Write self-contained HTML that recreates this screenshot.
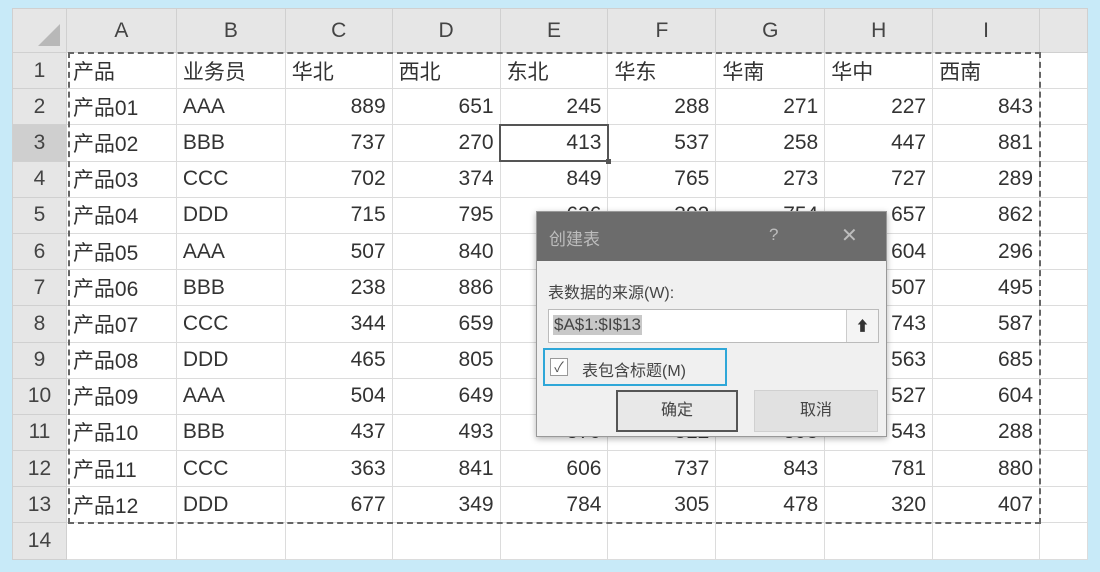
<!DOCTYPE html>
<html><head><meta charset="utf-8"><style>
*{margin:0;padding:0;box-sizing:border-box}
body{width:1100px;height:572px;background:#c8eaf8;position:relative;overflow:hidden;font-family:"Liberation Sans","Noto Sans CJK SC",sans-serif;color:#333}
#wrap{position:absolute;left:12px;top:8px;width:1076px;height:552px;background:#fff;overflow:hidden}
table{border-collapse:collapse;table-layout:fixed;font-size:21px}
td{border:1px solid #dcdcdc;height:36.2px;padding:0 6px;white-space:nowrap;overflow:hidden}
tr.h td{height:44px;background:#e6e6e6;text-align:center;color:#444;border-color:#d0d0d0}
td.r{background:#e6e6e6;text-align:center;color:#444;border-color:#d0d0d0;padding:0}
td.n{text-align:right}
td.sel{background:#cfcfcf}
.corner{position:relative}
.corner:after{content:"";position:absolute;right:6px;bottom:6px;border-style:solid;border-width:0 0 22px 22px;border-color:transparent transparent #b8b8b8 transparent}
#marq{position:absolute;left:68px;top:52px;width:973px;height:472px;border:2px dashed #666}
#cur{position:absolute;left:499px;top:124px;width:110px;height:38px;border:2px solid #555}
#cur:after{content:"";position:absolute;right:-4px;bottom:-4px;width:5px;height:5px;background:#555}
#dlg{position:absolute;left:536px;top:211px;width:351px;height:226px;background:#f0f0f0;border:1px solid #999;box-shadow:0 2px 6px rgba(0,0,0,.3)}
#tt{height:49px;background:#6c6c6c;color:#bdbdbd;font-size:17px;padding:15px 0 0 12px;position:relative}
#tt span{position:absolute;top:13px}
</style></head><body>
<div id="wrap">
<table>
<colgroup><col style="width:54px"><col style="width:110px"><col style="width:109px"><col style="width:107px"><col style="width:108px"><col style="width:108px"><col style="width:108px"><col style="width:109px"><col style="width:108px"><col style="width:107px"><col style="width:48px"></colgroup>
<tr class="h"><td class="corner"></td><td>A</td><td>B</td><td>C</td><td>D</td><td class="sel">E</td><td>F</td><td>G</td><td>H</td><td>I</td><td></td></tr>
<tr><td class="r">1</td><td>产品</td><td>业务员</td><td>华北</td><td>西北</td><td>东北</td><td>华东</td><td>华南</td><td>华中</td><td>西南</td><td></td></tr>
<tr><td class="r">2</td><td>产品01</td><td>AAA</td><td class="n">889</td><td class="n">651</td><td class="n">245</td><td class="n">288</td><td class="n">271</td><td class="n">227</td><td class="n">843</td><td></td></tr>
<tr><td class="r sel">3</td><td>产品02</td><td>BBB</td><td class="n">737</td><td class="n">270</td><td class="n">413</td><td class="n">537</td><td class="n">258</td><td class="n">447</td><td class="n">881</td><td></td></tr>
<tr><td class="r">4</td><td>产品03</td><td>CCC</td><td class="n">702</td><td class="n">374</td><td class="n">849</td><td class="n">765</td><td class="n">273</td><td class="n">727</td><td class="n">289</td><td></td></tr>
<tr><td class="r">5</td><td>产品04</td><td>DDD</td><td class="n">715</td><td class="n">795</td><td class="n">636</td><td class="n">302</td><td class="n">754</td><td class="n">657</td><td class="n">862</td><td></td></tr>
<tr><td class="r">6</td><td>产品05</td><td>AAA</td><td class="n">507</td><td class="n">840</td><td class="n">512</td><td class="n">418</td><td class="n">367</td><td class="n">604</td><td class="n">296</td><td></td></tr>
<tr><td class="r">7</td><td>产品06</td><td>BBB</td><td class="n">238</td><td class="n">886</td><td class="n">433</td><td class="n">721</td><td class="n">590</td><td class="n">507</td><td class="n">495</td><td></td></tr>
<tr><td class="r">8</td><td>产品07</td><td>CCC</td><td class="n">344</td><td class="n">659</td><td class="n">318</td><td class="n">266</td><td class="n">481</td><td class="n">743</td><td class="n">587</td><td></td></tr>
<tr><td class="r">9</td><td>产品08</td><td>DDD</td><td class="n">465</td><td class="n">805</td><td class="n">702</td><td class="n">539</td><td class="n">614</td><td class="n">563</td><td class="n">685</td><td></td></tr>
<tr><td class="r">10</td><td>产品09</td><td>AAA</td><td class="n">504</td><td class="n">649</td><td class="n">287</td><td class="n">846</td><td class="n">352</td><td class="n">527</td><td class="n">604</td><td></td></tr>
<tr><td class="r">11</td><td>产品10</td><td>BBB</td><td class="n">437</td><td class="n">493</td><td class="n">879</td><td class="n">812</td><td class="n">893</td><td class="n">543</td><td class="n">288</td><td></td></tr>
<tr><td class="r">12</td><td>产品11</td><td>CCC</td><td class="n">363</td><td class="n">841</td><td class="n">606</td><td class="n">737</td><td class="n">843</td><td class="n">781</td><td class="n">880</td><td></td></tr>
<tr><td class="r">13</td><td>产品12</td><td>DDD</td><td class="n">677</td><td class="n">349</td><td class="n">784</td><td class="n">305</td><td class="n">478</td><td class="n">320</td><td class="n">407</td><td></td></tr>
<tr><td class="r">14</td><td></td><td></td><td></td><td></td><td></td><td></td><td></td><td></td><td></td><td></td></tr>
</table>
</div>
<div id="marq"></div>
<div id="cur"></div>
<div id="dlg">
 <div id="tt"><span style="left:12px">创建表</span><span style="left:232px">?</span><span style="left:304px;font-size:20px;top:11px">✕</span></div>
 <div style="position:absolute;left:11px;top:67px;font-size:16px;color:#444">表数据的来源(W):</div>
 <div style="position:absolute;left:11px;top:97px;width:331px;height:34px;background:#fff;border:1px solid #bbb">
  <span style="position:absolute;left:4px;top:5px;background:#c8c8c8;font-size:17px;color:#444;padding:0 1px">$A$1:$I$13</span>
  <div style="position:absolute;right:0;top:0;width:32px;height:32px;border-left:1px solid #ccc;background:#f4f4f4;text-align:center;font-size:14px;line-height:32px;color:#333">⬆</div>
 </div>
 <div style="position:absolute;left:6px;top:136px;width:184px;height:38px;border:2px solid #2fa7d8">
  <div style="position:absolute;left:5px;top:8px;width:18px;height:18px;border:1px solid #999;background:#fff;font-size:14px;line-height:16px;text-align:center;color:#555">✓</div>
  <span style="position:absolute;left:37px;top:7px;font-size:16px;color:#444">表包含标题(M)</span>
 </div>
 <div style="position:absolute;left:79px;top:178px;width:122px;height:42px;border:2px solid #555;background:#e8e8e8;text-align:center;line-height:38px;font-size:16px;color:#444">确定</div>
 <div style="position:absolute;left:217px;top:178px;width:124px;height:42px;background:#e1e1e1;border:1px solid #d0d0d0;text-align:center;line-height:40px;font-size:16px;color:#444">取消</div>
</div>
</body></html>
